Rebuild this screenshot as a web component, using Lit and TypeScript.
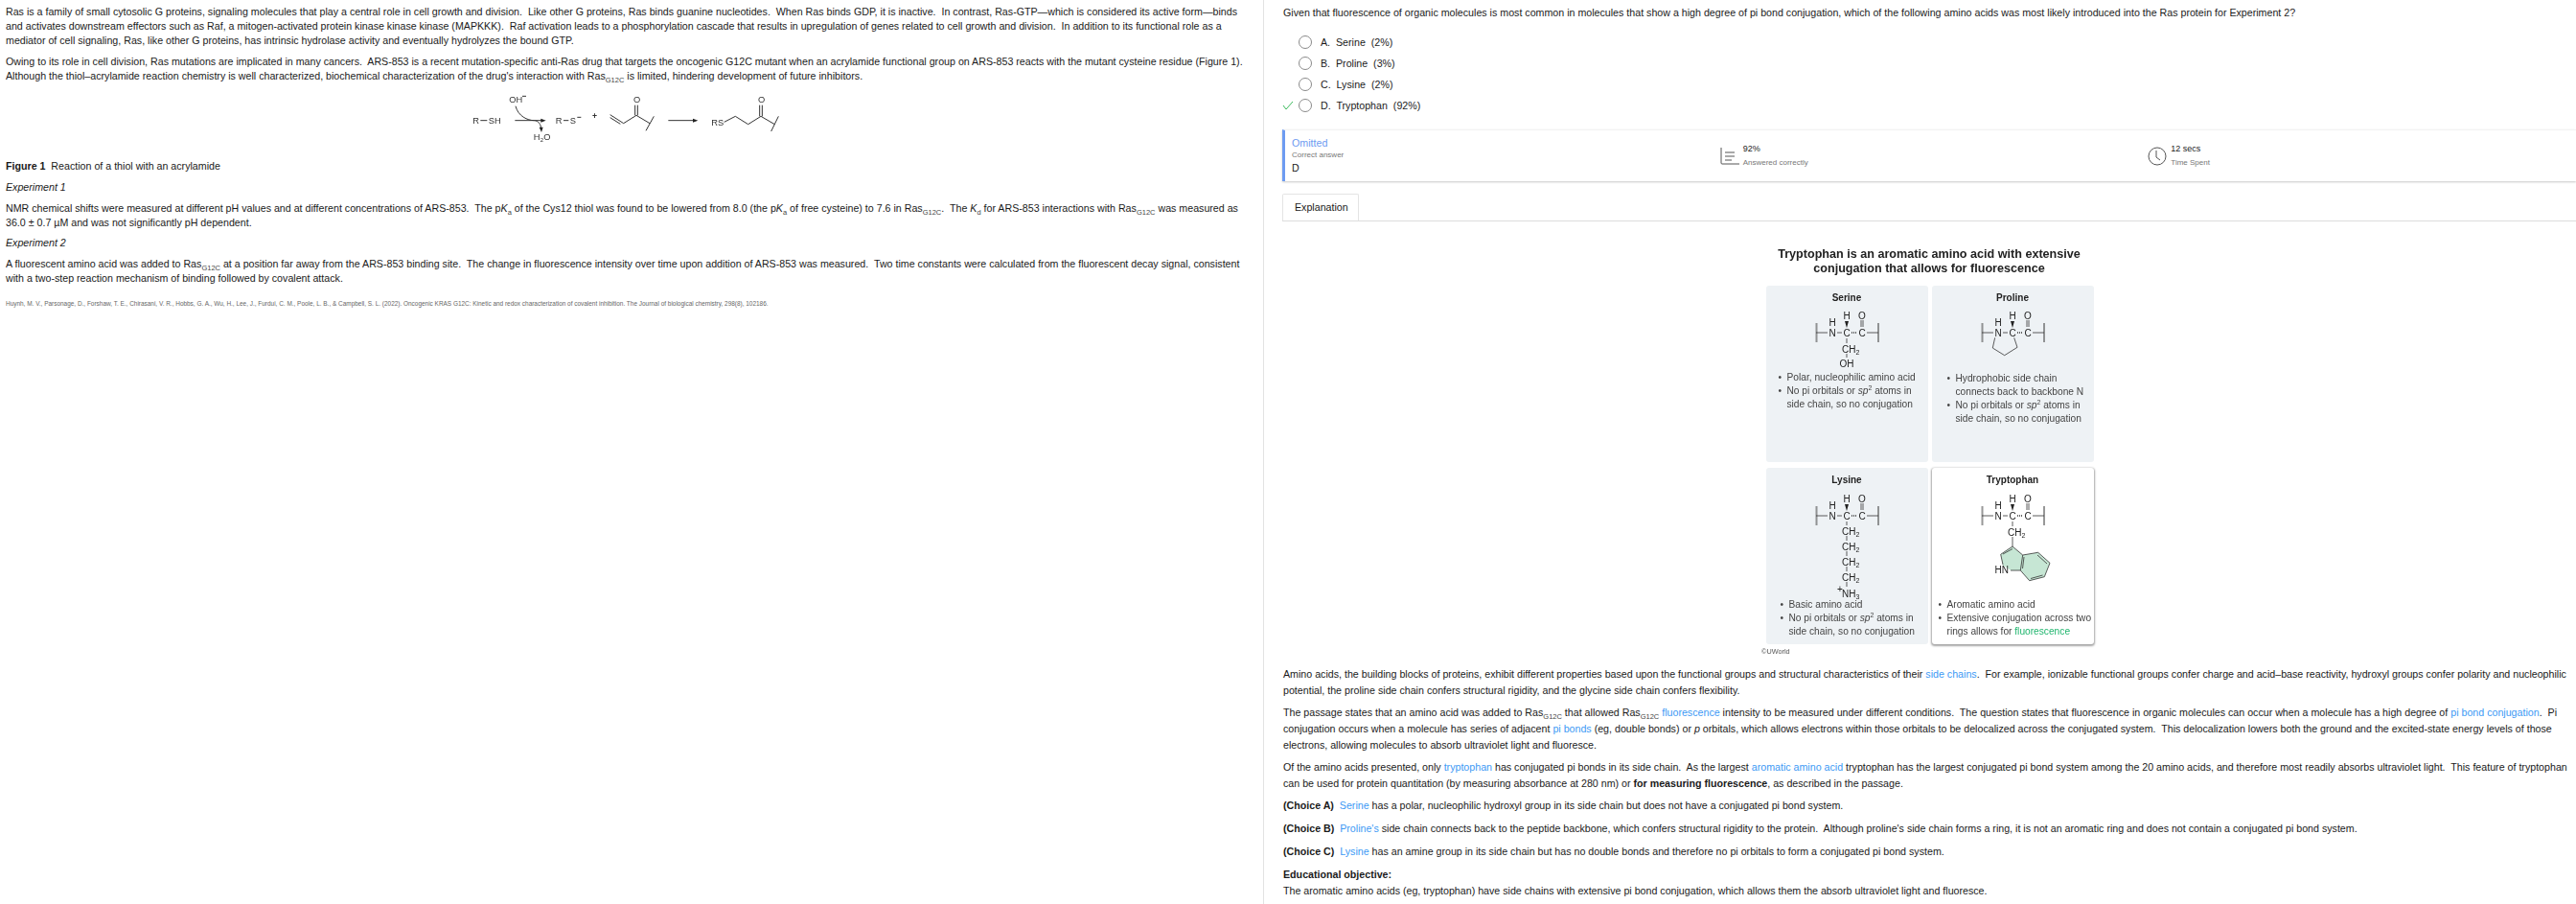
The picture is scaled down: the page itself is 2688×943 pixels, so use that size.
import { LitElement, html, css, svg } from "lit";
import { customElement } from "lit/decorators.js";

const T = (x: number, y: number, s: string, a = "middle") =>
  svg`<text x=${x} y=${y} text-anchor=${a}>${s}</text>`;
const L = (a: number, b: number, c: number, d: number) => svg`<line x1=${a} y1=${b} x2=${c} y2=${d}></line>`;

const ch2 = (y: number) => svg`
  <text x="79" y=${y + 3.5}>CH<tspan font-size="7" dy="2">2</tspan></text>`;

const backbone = (y: number) => svg`
  <line class="hash" x1="52.5" y1=${y - 10} x2="52.5" y2=${y + 10}></line>
  <line class="hash" x1="117" y1=${y - 10} x2="117" y2=${y + 10}></line>
  ${L(52, y, 64, y)}
  ${T(69, y + 3.5, "N")}
  ${T(69, y - 7.5, "H")}
  ${L(74, y, 79, y)}
  ${T(84, y + 3.5, "C")}
  ${T(84, y - 14.5, "H")}
  <polygon points="84,${y - 5} 82,${y - 12} 86,${y - 12}" fill="#222" stroke="none"></polygon>
  <line class="dots" x1="89" y1=${y} x2="95" y2=${y}></line>
  ${T(100, y + 3.5, "C")}
  ${L(99, y - 13, 99, y - 6)}
  ${L(101, y - 13, 101, y - 6)}
  ${T(100, y - 14.5, "O")}
  ${L(105, y, 117, y)}
`;

const serine = svg`
  ${backbone(49)}
  ${L(84, 55, 84, 60)}
  ${ch2(66)}
  ${L(84, 71, 84, 75)}
  ${T(84, 85, "OH")}
`;
const proline = svg`
  ${backbone(49)}
  <polyline points="65.7,54.3 63.3,65 75.7,72.7 89,64.3 85.7,54.3"></polyline>
`;
const lysine = svg`
  ${backbone(50)}
  ${L(84, 56, 84, 60)}
  ${ch2(66)}
  ${L(84, 71, 84, 76)}
  ${ch2(82)}
  ${L(84, 87, 84, 92)}
  ${ch2(98)}
  ${L(84, 103, 84, 108)}
  ${ch2(114)}
  ${L(84, 119, 84, 124)}
  <text x="74" y="130" font-size="7">+</text>
  <text x="79" y="134.5">NH<tspan font-size="7" dy="2">3</tspan></text>
`;
const tryptophan = svg`
  ${backbone(50)}
  ${L(84, 56, 84, 61)}
  ${ch2(67)}
  ${L(84, 72, 84, 82)}
  <polygon fill="#c6e6d4" stroke="none" points="84,82 71.7,90.3 74,101.7 82.3,107 92.3,107 101.7,117.7 117.3,113.7 123,99.3 110.7,88.3 94.7,91"></polygon>
  <polyline points="74,101 71.7,90.3 84,82 94.7,91 92.3,107 82,107"></polyline>
  <polyline points="94.7,91 110.7,88.3 123,99.3 117.3,113.7 101.7,117.7 92.3,107"></polyline>
  ${L(74, 90, 84, 84.5)}
  ${L(96, 93, 94.5, 105)}
  ${L(110, 91, 120, 100)}
  ${L(115.5, 112, 103, 115.5)}
  <text x="72.7" y="110" text-anchor="middle">HN</text>
`;

@customElement("app-root")
export class AppRoot extends LitElement {
  static styles = css`
    :host {
      display: block;
      font-family: "Liberation Sans", Arial, sans-serif;
      font-size: 10.67px;
      line-height: 15px;
      color: #1a1a1a;
      background: #fff;
      overflow: hidden;
    }
    .page { display: flex; height: 943px; }
    .left {
      width: 1319px;
      box-sizing: border-box;
      flex: none;
      padding: 5px 6px 0 6px;
      border-right: 1px solid #e3e3e3;
    }
    .right { flex: 1; min-width: 0; padding: 6px 0 0 19px; }
    p { margin: 0 0 6.67px; white-space: pre-wrap; }
    .left p { padding-right: 14px; }
    sub { font-size: 7.5px; line-height: 0; color: #444; }
    sup { font-size: 7px; line-height: 0; }
    .reaction { display: block; margin: 0 auto 5px; width: 360px; height: 68px; filter: blur(0.3px); }
    .reaction text { font-size: 28px; fill: #333; }
    .reaction text.plus { font-size: 26px; font-weight: 700; }
    .reaction text.sub2 { font-size: 18px; }
    .reaction line, .reaction path { stroke: #333; stroke-width: 3; fill: none; }
    .reaction polygon { fill: #222; stroke: none; }
    .left p.cite { font-size: 6.45px; color: #666; margin-top: 11px; }
    .q { padding: 0 12px 0 1px; margin: 0 0 12px; }
    .choices { display: flex; flex-direction: column; }
    .choice { display: flex; align-items: center; height: 22px; }
    .choice-label { white-space: pre; }
    .tick { width: 17px; flex: none; display: flex; }
    .radio {
      width: 12px;
      height: 12px;
      border: 1px solid #8a8a8a;
      border-radius: 50%;
      flex: none;
      margin-right: 9px;
    }
    .stats {
      display: grid;
      grid-template-columns: repeat(3, 1fr);
      margin-top: 14px;
      height: 53px;
      padding-left: 7px;
      border-left: 3px solid #6d9bf1;
      border-top: 1px solid #f3f3f3;
      box-shadow: 0 1px 2px rgba(0, 0, 0, 0.22);
      align-items: center;
    }
    .status { display: flex; flex-direction: column; }
    .omitted { color: #6d9bf1; line-height: 13px; }
    .muted { color: #777; font-size: 8px; line-height: 12px; }
    .stat { display: flex; align-items: center; gap: 4px; }
    .stat b { font-weight: 400; font-size: 9px; line-height: 11px; display: block; }
    .tabs { margin-top: 13px; border-bottom: 1px solid #ddd; display: flex; }
    .tab {
      height: 28px;
      box-sizing: border-box;
      width: 80px;
      padding-left: 12px;
      display: flex;
      align-items: center;
      border: 1px solid #e4e4e4;
      border-bottom: none;
      border-radius: 2px 2px 0 0;
      background: #fff;
    }
    .figure { width: 350px; margin: 27px auto 0; filter: blur(0.35px); }
    .title {
      font-weight: 700;
      font-size: 12.6px;
      line-height: 15px;
      text-align: center;
      color: #222;
      margin: 0 -10px 10px;
    }
    .grid {
      display: grid;
      grid-template-columns: 169px 169px;
      grid-auto-rows: 184px;
      gap: 6px 4px;
      padding-left: 4.5px;
    }
    .mol {
      background: #eef2f5;
      border-radius: 3px;
      font-size: 10.2px;
      line-height: 14px;
      color: #444;
    }
    .mol.hl { background: #fff; box-shadow: 0 1px 2px 1px rgba(0, 0, 0, 0.35); }
    .mol h4 { margin: 0; height: 18px; padding-top: 6px; box-sizing: border-box; font-size: 10px; line-height: 13px; text-align: center; color: #222; }
    .mol svg { display: block; width: 169px; }
    .mol svg text { font-size: 10px; fill: #222; }
    .mol svg line, .mol svg polyline { stroke: #333; stroke-width: 0.8; fill: none; }
    .mol svg line.hash { stroke-width: 2; stroke-dasharray: 0.6 0.6; }
    .mol svg line.dots { stroke-width: 1.6; stroke-dasharray: 1 1; }
    ul { margin: 0; padding: 0; list-style: none; }
    li { position: relative; }
    li::before { content: "•"; position: absolute; left: -9px; }
    .list-a { padding-left: 22px; }
    .list-b { padding-left: 25px; padding-top: 1px; }
    .list-c { padding-left: 24px; margin-top: -1px; }
    .list-d { padding-left: 16px; margin-top: -1px; }
    .green { color: #1fb56d; }
    .credit { font-size: 7.3px; color: #555; line-height: 9px; margin-top: 3px; }
    .exp { padding: 11px 0 0 1px; line-height: 17px; }
    .exp p { margin-bottom: 6px; }
    .exp p.c { margin-bottom: 7px; }
    .exp p.obj { margin: 0; }
    a { color: #3d9af5; text-decoration: none; }
  `;

  private stat(icon: unknown, top: string, bottom: string) {
    return html`<div class="stat">${icon}<div><b>${top}</b><span class="muted">${bottom}</span></div></div>`;
  }

  render() {
    const ras = html`Ras<sub>G12C</sub>`;
    const chart = html`<svg width="20" height="18" viewBox="0 0 20 18" fill="none" stroke="#555" stroke-width="1"><path d="M1 0v16q0 1 1 1h18M5 5h10M5 9h10M5 13h7"></path></svg>`;
    const clock = html`<svg width="20" height="20" viewBox="0 0 20 20" fill="none" stroke="#555" stroke-width="1"><circle cx="10" cy="10" r="9"></circle><path d="M9 4v7l4 3"></path></svg>`;
    return html`
      <div class="page">
        <section class="left">
          <p>Ras is a family of small cytosolic G proteins, signaling molecules that play a central role in cell growth and division.  Like other G proteins, Ras binds guanine nucleotides.  When Ras binds GDP, it is inactive.  In contrast, Ras-GTP—which is considered its active form—binds and activates downstream effectors such as Raf, a mitogen-activated protein kinase kinase kinase (MAPKKK).  Raf activation leads to a phosphorylation cascade that results in upregulation of genes related to cell growth and division.  In addition to its functional role as a mediator of cell signaling, Ras, like other G proteins, has intrinsic hydrolase activity and eventually hydrolyzes the bound GTP.</p>
          <p>Owing to its role in cell division, Ras mutations are implicated in many cancers.  ARS-853 is a recent mutation-specific anti-Ras drug that targets the oncogenic G12C mutant when an acrylamide functional group on ARS-853 reacts with the mutant cysteine residue (Figure 1).  Although the thiol–acrylamide reaction chemistry is well characterized, biochemical characterization of the drug's interaction with ${ras} is limited, hindering development of future inhibitors.</p>
          <svg class="reaction" viewBox="60 15 1080 204">
            <text x="103" y="122">R</text><line x1="127" y1="113" x2="148" y2="113"></line><text x="152" y="122">SH</text>
            <text x="217" y="57">OH</text><line x1="258" y1="37" x2="270" y2="37"></line>
            <line x1="235" y1="113" x2="320" y2="113"></line><polygon points="332,113 316,107 316,119"></polygon>
            <path d="M237 68 C245 100 275 113 295 113 C308 113 316 125 317 138"></path><polygon points="318,150 311,134 323,134"></polygon>
            <text x="293" y="173">H</text><text class="sub2" x="314" y="180">2</text><text x="325" y="173">O</text>
            <text x="362" y="122">R</text><line x1="387" y1="113" x2="403" y2="113"></line><text x="407" y="122">S</text><line x1="430" y1="103" x2="442" y2="103"></line>
            <text class="plus" x="477" y="107">+</text>
            <path d="M533 95 L575 122 L615 97 L657 122 M533 104 L565 124 M611 97 V65 M619 97 V65 M670 100 L645 145"></path>
            <text x="606" y="58">O</text>
            <line x1="715" y1="113" x2="795" y2="113"></line><polygon points="808,113 792,107 792,119"></polygon>
            <text x="850" y="130">RS</text>
            <path d="M890 118 L925 100 L965 125 L1005 100 L1048 125 M1001 100 V65 M1009 100 V65 M1060 100 L1037 147"></path>
            <text x="996" y="58">O</text>
          </svg>
          <p><b>Figure 1</b>  Reaction of a thiol with an acrylamide</p>
          <p><i>Experiment 1</i></p>
          <p>NMR chemical shifts were measured at different pH values and at different concentrations of ARS-853.  The p<i>K</i><sub>a</sub> of the Cys12 thiol was found to be lowered from 8.0 (the p<i>K</i><sub>a</sub> of free cysteine) to 7.6 in ${ras}.  The <i>K</i><sub>d</sub> for ARS-853 interactions with ${ras} was measured as 36.0 ± 0.7 µM and was not significantly pH dependent.</p>
          <p><i>Experiment 2</i></p>
          <p>A fluorescent amino acid was added to ${ras} at a position far away from the ARS-853 binding site.  The change in fluorescence intensity over time upon addition of ARS-853 was measured.  Two time constants were calculated from the fluorescent decay signal, consistent with a two-step reaction mechanism of binding followed by covalent attack.</p>
          <p class="cite">Huynh, M. V., Parsonage, D., Forshaw, T. E., Chirasani, V. R., Hobbs, G. A., Wu, H., Lee, J., Furdui, C. M., Poole, L. B., &amp; Campbell, S. L. (2022). Oncogenic KRAS G12C: Kinetic and redox characterization of covalent inhibition. The Journal of biological chemistry, 298(8), 102186.</p>
        </section>
        <section class="right">
          <p class="q">Given that fluorescence of organic molecules is most common in molecules that show a high degree of pi bond conjugation, which of the following amino acids was most likely introduced into the Ras protein for Experiment 2?</p>
          <div class="choices">
            ${[["A.", "Serine", "2"], ["B.", "Proline", "3"], ["C.", "Lysine", "2"], ["D.", "Tryptophan", "92"]].map(
              ([l, n, v], i) => html`<div class="choice">
                <span class="tick">${i === 3
                  ? html`<svg width="12" height="10" viewBox="0 0 12 10" fill="none" stroke="#3dbb5d" stroke-width="1"><path d="M1 5l3 4 7-8"></path></svg>`
                  : ""}</span>
                <span class="radio"></span>
                <span class="choice-label">${l}  ${n}  (${v}%)</span>
              </div>`
            )}
          </div>
          <div class="stats">
            <div class="status"><span class="omitted">Omitted</span><span class="muted">Correct answer</span><span>D</span></div>
            ${this.stat(chart, "92%", "Answered correctly")}
            ${this.stat(clock, "12 secs", "Time Spent")}
          </div>
          <div class="tabs"><div class="tab">Explanation</div></div>
          <div class="figure">
            <div class="title">Tryptophan is an aromatic amino acid with extensive<br />conjugation that allows for fluorescence</div>
            <div class="grid">
              <div class="mol">
                <h4>Serine</h4>
                <svg viewBox="0 18 169 71" height="71">${serine}</svg>
                <ul class="list-a"><li>Polar, nucleophilic amino acid</li><li>No pi orbitals or <i>sp</i><sup>2</sup> atoms in<br />side chain, so no conjugation</li></ul>
              </div>
              <div class="mol">
                <h4>Proline</h4>
                <svg viewBox="0 18 169 71" height="71">${proline}</svg>
                <ul class="list-b"><li>Hydrophobic side chain<br />connects back to backbone N</li><li>No pi orbitals or <i>sp</i><sup>2</sup> atoms in<br />side chain, so no conjugation</li></ul>
              </div>
              <div class="mol">
                <h4>Lysine</h4>
                <svg viewBox="0 18 169 119" height="119">${lysine}</svg>
                <ul class="list-c"><li>Basic amino acid</li><li>No pi orbitals or <i>sp</i><sup>2</sup> atoms in<br />side chain, so no conjugation</li></ul>
              </div>
              <div class="mol hl">
                <h4>Tryptophan</h4>
                <svg viewBox="0 18 169 119" height="119">${tryptophan}</svg>
                <ul class="list-d"><li>Aromatic amino acid</li><li>Extensive conjugation across two<br />rings allows for <span class="green">fluorescence</span></li></ul>
              </div>
            </div>
            <div class="credit">©UWorld</div>
          </div>
          <div class="exp">
            <p>Amino acids, the building blocks of proteins, exhibit different properties based upon the functional groups and structural characteristics of their <a>side chains</a>.  For example, ionizable functional groups confer charge and acid–base reactivity, hydroxyl groups confer polarity and nucleophilic potential, the proline side chain confers structural rigidity, and the glycine side chain confers flexibility.</p>
            <p>The passage states that an amino acid was added to ${ras} that allowed ${ras} <a>fluorescence</a> intensity to be measured under different conditions.  The question states that fluorescence in organic molecules can occur when a molecule has a high degree of <a>pi bond conjugation</a>.  Pi conjugation occurs when a molecule has series of adjacent <a>pi bonds</a> (eg, double bonds) or <i>p</i> orbitals, which allows electrons within those orbitals to be delocalized across the conjugated system.  This delocalization lowers both the ground and the excited-state energy levels of those electrons, allowing molecules to absorb ultraviolet light and fluoresce.</p>
            <p>Of the amino acids presented, only <a>tryptophan</a> has conjugated pi bonds in its side chain.  As the largest <a>aromatic amino acid</a> tryptophan has the largest conjugated pi bond system among the 20 amino acids, and therefore most readily absorbs ultraviolet light.  This feature of tryptophan can be used for protein quantitation (by measuring absorbance at 280 nm) or <b>for measuring fluorescence</b>, as described in the passage.</p>
            <p class="c"><b>(Choice A)</b>  <a>Serine</a> has a polar, nucleophilic hydroxyl group in its side chain but does not have a conjugated pi bond system.</p>
            <p class="c"><b>(Choice B)</b>  <a>Proline's</a> side chain connects back to the peptide backbone, which confers structural rigidity to the protein.  Although proline's side chain forms a ring, it is not an aromatic ring and does not contain a conjugated pi bond system.</p>
            <p class="c"><b>(Choice C)</b>  <a>Lysine</a> has an amine group in its side chain but has no double bonds and therefore no pi orbitals to form a conjugated pi bond system.</p>
            <p class="obj"><b>Educational objective:</b></p>
            <p>The aromatic amino acids (eg, tryptophan) have side chains with extensive pi bond conjugation, which allows them the absorb ultraviolet light and fluoresce.</p>
          </div>
        </section>
      </div>
    `;
  }
}
